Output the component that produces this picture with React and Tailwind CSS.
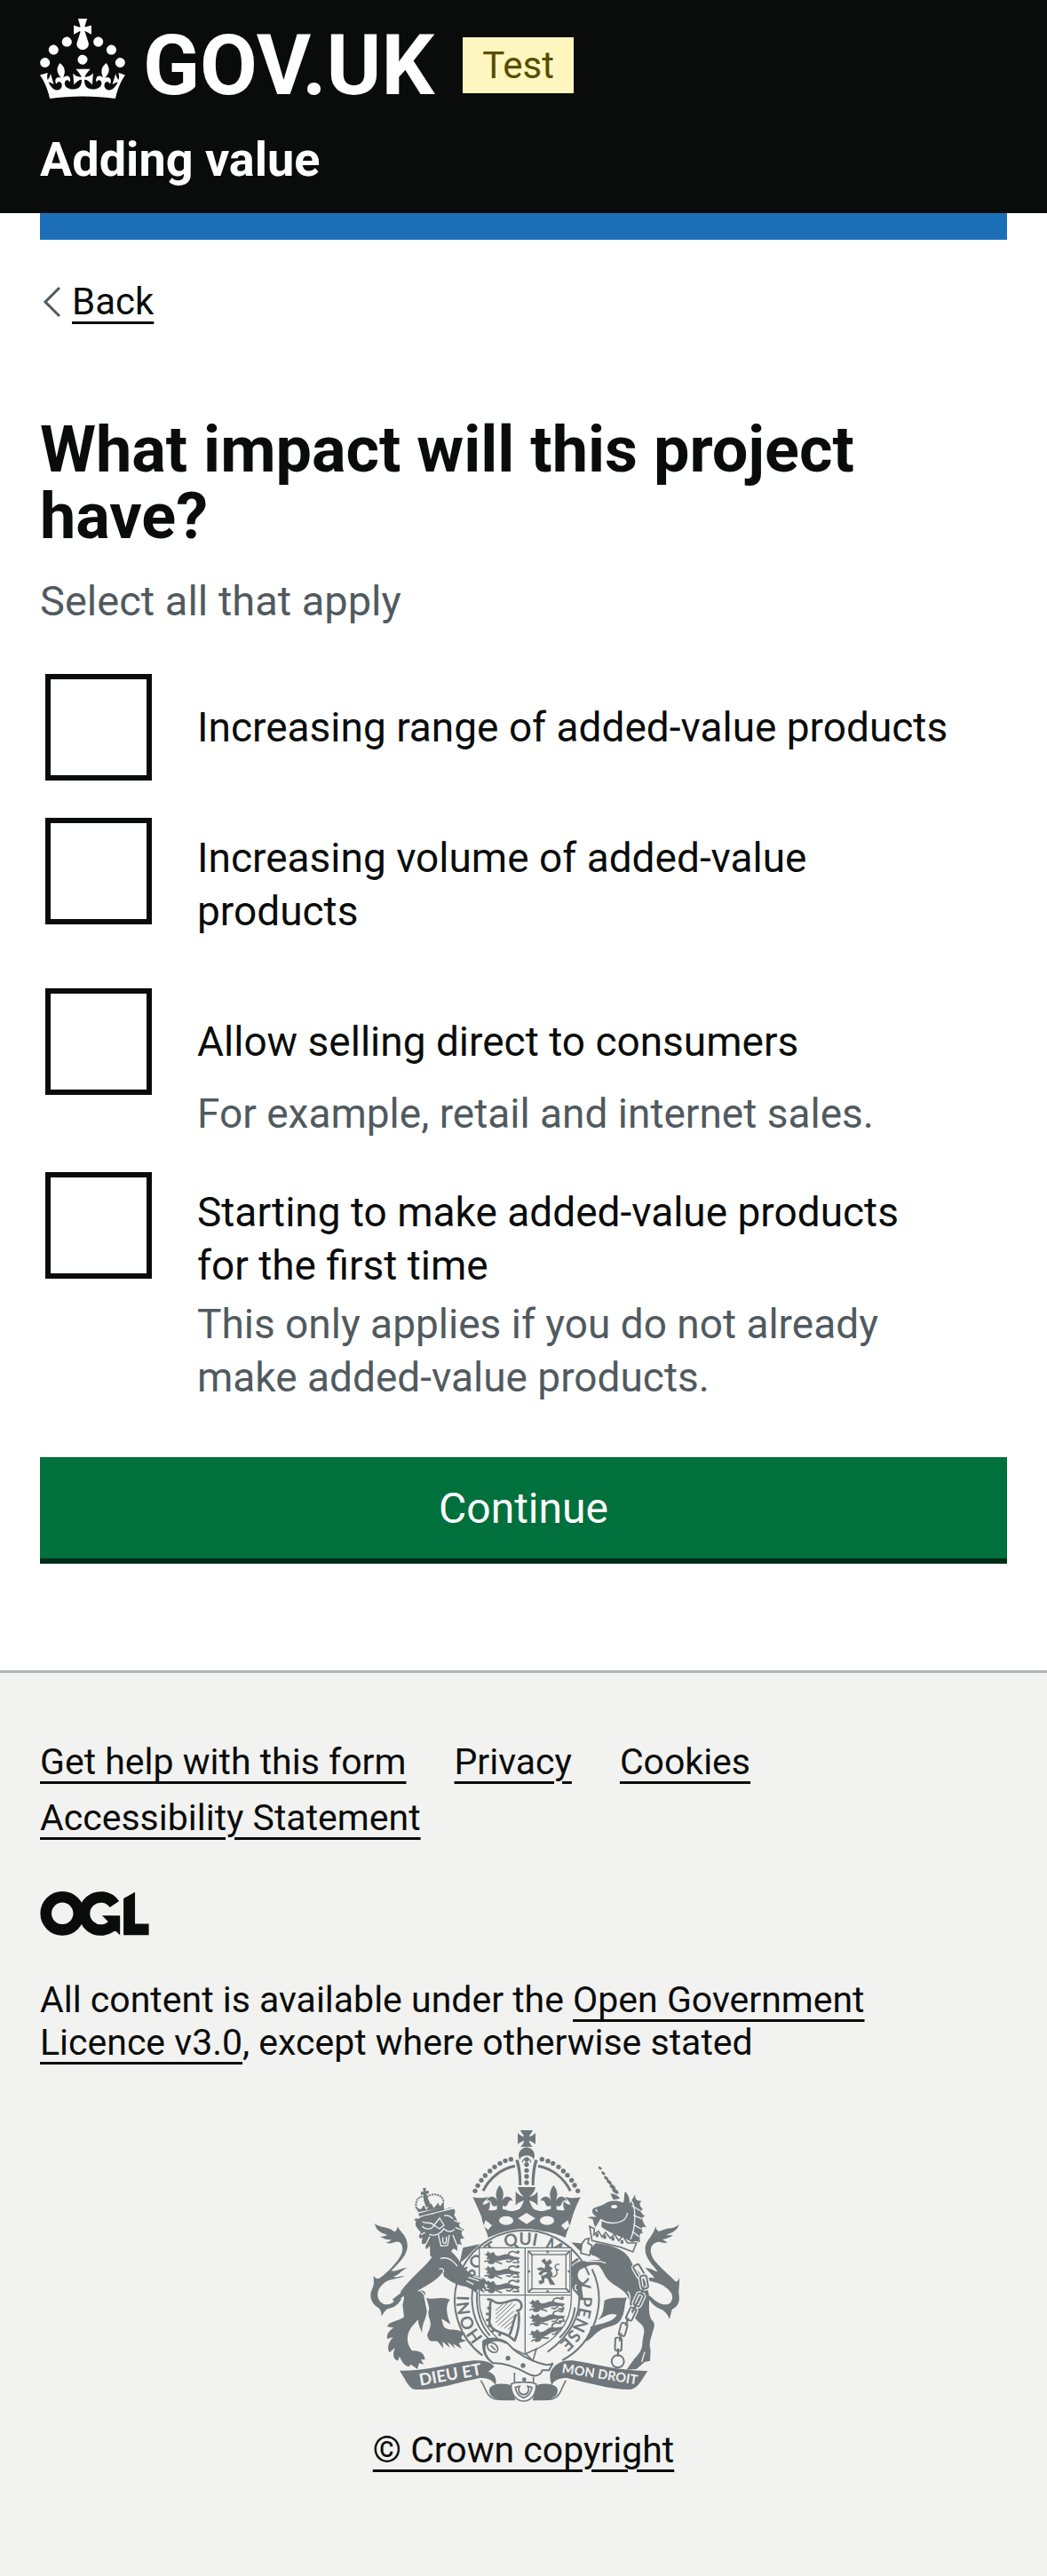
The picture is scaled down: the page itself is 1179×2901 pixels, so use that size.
const options = [
  { id: "range", label: "Increasing range of added-value products" },
  { id: "volume", label: "Increasing volume of added-value products" },
  {
    id: "direct",
    label: "Allow selling direct to consumers",
    hint: "For example, retail and internet sales.",
  },
  {
    id: "starting",
    label: "Starting to make added-value products for the first time",
    hint: "This only applies if you do not already make added-value products.",
  },
];

const footerLinks = ["Get help with this form", "Privacy", "Cookies", "Accessibility Statement"];

const linkClass = "underline decoration-[3px] underline-offset-[8px]";

function Crown() {
  return (
    <svg viewBox="0 0 32 30" className="h-[90px] w-24 shrink-0" fill="currentColor" aria-hidden="true">
      <path d="M22.6 10.4c-1 .4-2-.1-2.4-1-.4-.9.1-2 1-2.4.9-.4 2 .1 2.4 1s-.1 2-1 2.4m-5.9 6.7c-.9.4-2-.1-2.4-1-.4-.9.1-2 1-2.4.9-.4 2 .1 2.4 1s-.1 2-1 2.4m10.8-3.7c-1 .4-2-.1-2.4-1-.4-.9.1-2 1-2.4.9-.4 2 .1 2.4 1s0 2-1 2.4m3.3 4.8c-1 .4-2-.1-2.4-1-.4-.9.1-2 1-2.4.9-.4 2 .1 2.4 1s-.1 2-1 2.4M17 4.7l2.3 1.2V2.5l-2.3.7-.2-.2.9-3h-3.4l.9 3-.2.2c-.1.1-2.3-.7-2.3-.7v3.4L15 4.7c.1.1.1.2.2.2l-1.3 4c-.1.2-.1.4-.1.6 0 1.1.8 2 1.9 2.2h.7c1-.2 1.9-1.1 1.9-2.1 0-.2 0-.4-.1-.6l-1.3-4c-.1-.2 0-.2.1-.3m-7.6 5.7c.9.4 2-.1 2.4-1 .4-.9-.1-2-1-2.4-.9-.4-2 .1-2.4 1s0 2 1 2.4m-5 3c.9.4 2-.1 2.4-1 .4-.9-.1-2-1-2.4-.9-.4-2 .1-2.4 1s.1 2 1 2.4m-3.2 4.8c.9.4 2-.1 2.4-1 .4-.9-.1-2-1-2.4-.9-.4-2 .1-2.4 1s0 2 1 2.4m14.8 11c4.4 0 8.6.3 12.3.8 1.1-4.5 2.4-7 3.7-8.8l-2.5-.9c.2 1.3.3 1.9 0 2.7-.4-.4-.8-1.1-1.1-2.3l-1.2 4c.7-.5 1.3-.8 2-.9-1.1 2.5-2.6 3.1-3.5 3-1.1-.2-1.7-1.2-1.5-2.1.3-1.2 1.5-1.5 2.1-.1 1.1-2.3-.8-3-2-2.3 1.9-1.9 2.1-3.5.6-5.6-2.1 1.6-2.1 3.2-1.2 5.5-1.2-1.4-3.2-.6-2.5 1.6.9-1.4 2.1-.5 1.9.8-.2 1.1-1.7 2.1-3.5 1.9-2.7-.2-2.9-2.1-2.9-3.6.7-.1 1.9.5 2.9 1.9l.4-4.3c-1.1 1.1-2.1 1.4-3.2 1.4.4-1.2 2.1-3 2.1-3h-5.4s1.7 1.9 2.1 3c-1.1 0-2.1-.2-3.2-1.4l.4 4.3c1-1.4 2.2-2 2.9-1.9-.1 1.5-.2 3.4-2.9 3.6-1.9.2-3.4-.8-3.5-1.9-.2-1.3 1-2.2 1.9-.8.7-2.3-1.2-3-2.5-1.6.9-2.2.9-3.9-1.2-5.5-1.5 2-1.3 3.7.6 5.6-1.2-.7-3.1 0-2 2.3.6-1.4 1.8-1.1 2.1.1.2.9-.3 1.9-1.5 2.1-.9.2-2.4-.5-3.5-3 .6 0 1.2.3 2 .9l-1.2-4c-.3 1.1-.7 1.9-1.1 2.3-.3-.8-.2-1.4 0-2.7l-2.9.9C1.3 23 2.6 25.5 3.7 30c3.7-.5 7.9-.8 12.3-.8" />
    </svg>
  );
}

function OglMark() {
  return (
    <svg viewBox="0 0 369 151" className="h-[50px] w-[123px]" role="img" aria-label="Open Government Licence">
      <g fill="none" stroke="#0a0c0b" strokeWidth="38">
        <circle cx="75" cy="75" r="56" />
        <path d="M252 44A56 56 0 1 0 252 107" />
      </g>
      <path d="M210 82H271V149L257 135C250 139 243 131 238 122L227 111L235 107Z" fill="#0a0c0b" />
      <path d="M283 24L322 2V110H369V149H283Z" fill="#0a0c0b" />
    </svg>
  );
}

function PassantLion({ transform }) {
  return (
    <g transform={transform}>
      <path d="M0 8L9 10L14 0L22 7L34 2L39 12L42 28L36 40C28 46 17 44 13 37L20 28L8 25L14 18Z" />
      <path d="M38 12C52 22 64 8 82 10L96 16C108 20 118 18 124 24L110 30L102 27L88 28C74 26 60 32 42 34Z" />
      <g fill="none" stroke="#6f777b" strokeWidth="5" strokeLinecap="round">
        <path d="M16 32L4 34M40 34L60 42M84 12C84 0 100 -2 108 4C118 10 124 -2 113 0M102 26L88 36L78 34M114 26L118 38L100 38" />
      </g>
    </g>
  );
}

const archBeads = [
  [405, 256], [414, 238], [426, 220], [439, 204], [455, 189], [471, 175], [489, 163], [507, 154], [526, 149],
  [631, 149], [651, 155], [668, 163], [687, 175], [703, 189], [717, 203], [731, 220], [741, 237], [752, 256],
];

function RoyalArms() {
  const ink = "#6f777b";
  const paper = "#f2f2f0";
  return (
    <svg viewBox="6 51 1125 918" className="h-[306px] w-[375px]" fill={ink} aria-hidden="true">
      <defs>
        <path id="garter-line" d="M571 812A187 187 0 0 1 571 438A187 187 0 0 1 571 812" />
        <clipPath id="shield-clip">
          <path d="M419 448H730V620C730 710 670 770 574 808C478 770 419 710 419 620Z" />
        </clipPath>
      </defs>

      {/* Crown */}
      <path d="M558 51H600C598 58 590 64 587 73C596 71 603 66 609 60V98C603 93 596 88 587 86C589 95 594 101 600 107H558C564 101 569 95 571 86C562 88 555 93 549 98V60C555 66 562 71 571 73C568 64 560 58 558 51Z" />
      <circle cx="579" cy="136" r="27" />
      <path d="M556 150C560 132 598 132 602 150L594 237H564Z" fill={paper} />
      <path d="M541 152L551 150C560 175 562 210 562 237H553C552 205 550 180 541 152Z" />
      <path d="M617 152L607 150C598 175 596 210 596 237H605C606 205 608 180 617 152Z" />
      <path d="M565 160A14 14 0 0 1 593 160" fill="none" stroke={ink} strokeWidth="4" />
      {[150, 167, 187, 207, 228].map((y) => (
        <circle key={y} cx="579" cy={y} r="8" />
      ))}
      {archBeads.map(([x, y]) => (
        <circle key={x} cx={x} cy={y} r="8" />
      ))}
      <path d="M432 256C452 215 490 182 540 172M727 256C706 215 668 182 618 172" fill="none" stroke={ink} strokeWidth="9" />
      <path d="M410 300C430 322 460 326 480 318C500 312 510 324 530 324C545 324 550 314 579 314C608 314 613 324 628 324C648 324 658 312 678 318C698 326 728 322 748 300L733 345C728 370 715 390 710 414C640 380 520 380 449 414C445 390 430 370 427 345Z" />
      <path d="M397 277C415 282 435 280 450 276C441 287 432 294 430 302C440 303 448 296 454 290C457 305 454 318 446 328L424 335Z" />
      <path d="M761 277C743 282 723 280 708 276C717 287 726 294 728 302C718 303 710 296 704 290C701 305 704 318 712 328L734 335Z" />
      {[0, 182].map((x) => (
        <path key={x} transform={`translate(${x} 0)`} d="M488 237C504 255 503 275 494 291C505 270 525 270 533 290C524 285 518 290 516 298C514 308 505 311 498 305V328H479V305C470 311 462 308 460 298C458 290 451 285 443 290C451 270 471 270 482 291C473 275 473 255 488 237Z" />
      ))}
      <path d="M549 243H609C607 257 598 268 588 276C603 272 612 265 616 257V305C610 297 600 291 588 288C592 300 600 315 608 324H550C558 315 566 300 570 288C560 291 548 297 542 305V257C548 265 557 272 570 276C560 268 552 257 549 243Z" />
      <g fill={paper}>
        <ellipse cx="510" cy="356" rx="24" ry="15" />
        <ellipse cx="648" cy="356" rx="24" ry="15" />
        <path d="M550 349L579 330L608 349L579 368Z" />
        <path d="M440 355L462 372L449 388L434 374Z" />
        <path d="M718 355L696 372L709 388L724 374Z" />
      </g>

      {/* Shoulder drapery behind the garter */}
      <path d="M364 448L448 430L400 460L352 502Z" />
      <path d="M730 430L790 436L800 470L760 460Z" />

      {/* Garter */}
      <circle cx="571" cy="626" r="235" fill={paper} stroke={paper} strokeWidth="14" />
      <path d="M345 560A235 235 0 0 0 430 812M360 520A235 235 0 0 1 790 540M800 520A235 235 0 0 1 700 828" fill="none" stroke={ink} strokeWidth="6" />
      <path d="M396 590C388 660 410 730 470 772M412 596C408 640 415 700 455 745M757 608C760 680 730 740 650 800M742 650C738 690 720 725 690 752" fill="none" stroke={ink} strokeWidth="6" />
      <g fontFamily="Lato, sans-serif" fontSize="58" fontWeight="700">
        <text><textPath href="#garter-line" startOffset="155">HONI</textPath></text>
        <text><textPath href="#garter-line" startOffset="366">SOIT</textPath></text>
        <text><textPath href="#garter-line" startOffset="522">QUI</textPath></text>
        <text><textPath href="#garter-line" startOffset="654">MAL</textPath></text>
        <text><textPath href="#garter-line" startOffset="814">Y</textPath></text>
        <text><textPath href="#garter-line" startOffset="868">PENSE</textPath></text>
      </g>

      {/* Shield */}
      <path d="M419 448H730V620C730 710 670 770 574 808C478 770 419 710 419 620Z" fill={paper} stroke={ink} strokeWidth="4" />
      <path d="M574 448V808M419 608H730" stroke={ink} strokeWidth="4" />
      <g clipPath="url(#shield-clip)">
        <PassantLion transform="translate(434 460)" />
        <PassantLion transform="translate(434 509)" />
        <PassantLion transform="translate(434 558)" />
        <PassantLion transform="translate(584 624) rotate(-4)" />
        <PassantLion transform="translate(584 674) rotate(-8)" />
        <PassantLion transform="translate(582 732) rotate(-18)" />
      </g>
      <g fill="none" stroke={ink}>
        <rect x="584" y="459" width="141" height="140" strokeWidth="3" />
        <rect x="597" y="471" width="115" height="116" strokeWidth="4" />
        <path d="M584 459l14 14M725 459l-14 14M584 599l14-14M725 599l-14-14" strokeWidth="6" />
        <path d="M650 458v8M650 592v8M583 528h8M718 528h8" strokeWidth="8" />
      </g>
      <path d="M628 492L640 484L646 496L658 486L665 498L654 508L668 518L660 524C668 532 670 545 660 548L668 560L676 574L658 572L650 552L640 550L638 566L624 572L618 560L630 558L628 544L644 538L650 530L636 532L628 542L618 536L632 522L622 526L612 518L628 514L640 518L642 506Z" />
      <path d="M664 546C680 548 686 534 678 520C670 506 682 502 690 504M678 520L688 524" fill="none" stroke={ink} strokeWidth="4" />
      <path d="M446 624C456 616 464 630 478 634C500 640 520 626 538 624C552 622 562 632 562 644C562 656 550 664 544 658M458 628C452 650 458 668 454 690C450 712 466 726 490 734C510 740 524 746 538 762M552 664C556 700 548 740 538 764M544 672C532 700 530 730 520 744" fill="none" stroke={ink} strokeWidth="8" />
      <path d="M446 652h14M442 672h14M442 692h14M448 712h14M462 732l10-10M486 746l6-12" stroke={ink} strokeWidth="9" />
      <path d="M474 660l26-22M474 674l42-40M474 688l56-54M474 702l68-64M482 710l54-48M492 716l44-38M504 720l30-26M516 724l16-14" stroke={ink} strokeWidth="3" />

      {/* Belt of the garter */}
      <path d="M432 765C450 748 500 752 520 776C535 796 560 812 600 830C630 840 650 850 668 838L655 862L632 862C625 885 600 884 580 872C540 850 500 836 466 838C440 820 430 800 432 765Z" fill={paper} stroke={ink} strokeWidth="6" />
      <path d="M432 765C450 748 500 752 520 776L498 768C478 760 450 764 440 780C438 805 450 822 470 840C445 830 428 800 432 765Z" />
      <ellipse cx="464" cy="785" rx="20" ry="14" transform="rotate(40 464 785)" fill="none" stroke={ink} strokeWidth="5" />
      <path d="M458 778L474 794" stroke={ink} strokeWidth="5" />
      <circle cx="516" cy="821" r="8" />
      <circle cx="567" cy="846" r="8" />
      <path d="M576 806L612 790L600 830Z" fill={paper} stroke={ink} strokeWidth="5" />
      <path d="M538 870V906M602 884V906" stroke={ink} strokeWidth="5" />
      <circle cx="571" cy="893" r="7" />

      {/* Buckle and ribbon ends */}
      <path d="M455 940C440 905 505 902 528 914L540 962C500 966 462 960 455 940Z" />
      <path d="M682 940C697 905 632 902 610 914L600 962C640 966 675 960 682 940Z" />
      <path d="M424 896C440 915 440 950 470 958C490 963 510 961 540 961M712 896C698 915 696 950 668 958C648 963 628 961 600 961" fill="none" stroke={ink} strokeWidth="5" />
      <path d="M527 908C545 900 592 900 611 908C614 945 592 966 569 966C546 966 524 945 527 908Z" fill={paper} stroke={ink} strokeWidth="5" />
      <path d="M541 920L555 916C548 930 556 944 569 944C582 944 590 930 583 916L597 920C594 938 586 950 569 955C552 950 544 938 541 920Z" fill="none" stroke={ink} strokeWidth="5" />

      {/* Motto scrolls */}
      <path d="M150 863C240 866 330 835 400 829C440 826 460 836 470 850L450 866C476 876 478 895 474 912C465 895 445 886 420 888C340 905 280 927 205 927C180 925 172 895 150 863Z" />
      <path d="M988 864C900 866 810 840 735 829C700 826 672 840 660 868C656 885 660 900 664 912C672 895 690 888 715 888C790 905 860 927 930 927C960 920 970 890 988 864Z" />
      <g fill={paper} fontFamily="Lato, sans-serif" fontWeight="700">
        <text x="220" y="914" fontSize="56" transform="rotate(-10 220 914)">DIEU ET</text>
        <text x="697" y="870" fontSize="44" transform="rotate(9 697 870)">MON DROIT</text>
      </g>

      {/* Lion */}
      <path d="M130 628L172 596" stroke={ink} strokeWidth="14" />
      <path d="M66 366C84 382 112 376 130 392C138 396 142 386 143 376C152 396 180 410 176 448C172 480 140 505 122 526C140 530 155 515 176 516C155 524 150 540 128 546C142 550 155 542 168 544C140 556 115 550 92 572C66 596 74 630 96 638C120 645 135 628 148 612L156 622C140 650 120 652 106 656C98 662 96 670 88 680C90 668 86 660 80 652C55 640 46 612 56 590C66 570 62 560 62 542C70 552 74 556 84 550C110 530 140 500 154 474C166 450 158 425 138 428C125 430 116 438 104 430C112 430 118 426 122 420C108 422 94 416 84 410C94 410 102 408 108 404C90 400 70 390 66 366Z" />
      <path d="M262 476C240 510 190 545 152 598C166 602 168 615 160 640L165 682C140 700 115 695 108 715L130 718C112 730 106 742 108 756L128 750C112 768 106 785 116 802L134 786C128 805 124 822 144 830L150 815C158 835 165 845 182 850L188 842L210 858L216 838L232 842L222 826L236 826C232 800 215 796 192 796C180 780 170 760 182 730C190 712 206 700 212 690C214 710 220 724 226 734C224 705 240 690 242 662L232 612C245 600 230 590 214 592C240 575 275 560 296 530L300 545C320 560 340 575 375 580L392 588L408 600L415 588L438 602L428 584L444 590L436 570L452 572L436 552L400 540C370 530 355 490 330 466L290 440Z" />
      <path d="M240 618C265 625 300 610 320 624C305 640 306 670 322 706C300 695 285 675 296 704C300 735 340 715 372 738C355 745 352 758 376 762L350 770L360 790L330 772L338 788L312 766L320 786L295 765L298 788L278 764C262 762 250 768 246 752C238 740 252 730 254 712C258 690 240 680 250 655C248 640 244 630 240 618Z" />
      <path d="M206 358C190 352 208 348 214 350C230 335 260 340 275 328L320 312C335 312 342 322 334 338C345 350 340 360 356 362C345 370 352 382 370 386C355 390 356 402 370 418C355 412 350 420 362 440C345 430 342 440 346 460C332 446 326 450 324 468C312 456 304 462 296 480L262 480C245 480 258 450 250 442C240 460 234 452 240 432C226 440 220 435 228 415C214 420 212 410 222 396C206 380 200 372 206 358Z" />
      <path d="M226 360C240 368 256 358 266 372C258 388 238 388 226 376M300 340C312 336 322 342 330 350M266 372L285 348L300 372L285 384ZM250 402C270 412 290 398 300 384C310 395 325 396 335 386M280 400L290 442L312 440L318 405M252 410L238 438M330 405L344 440M338 380L362 388M334 356L352 362M236 396L222 404" fill="none" stroke={paper} strokeWidth="4" />
      <path d="M296 412V428C300 436 308 434 308 424V410" fill="none" stroke={paper} strokeWidth="4" />
      <path d="M206 344L334 314" stroke={paper} strokeWidth="5" />
      <path d="M214 332L298 310L302 320L216 342Z" />
      <path d="M213 328L205 312L222 318L232 304L240 320L256 298L266 314L280 296L286 308L300 290L299 312Z" />
      <path d="M207 316C200 290 215 272 232 276M242 276C262 262 292 266 298 290" fill="none" stroke={ink} strokeWidth="6" strokeDasharray="6 3" />
      <path d="M229 246H239L238 257L248 254V266L240 265L246 282L256 305L240 312L232 290L230 268L222 270V258L230 260Z" />
      <path d="M284 520C294 515 300 520 298 532M212 594C220 590 226 595 236 612M376 560L400 572M382 548L418 560M398 545L430 553M288 484C310 478 330 490 345 510" fill="none" stroke={paper} strokeWidth="4" />

      {/* Unicorn */}
      <path d="M1094 368C1088 395 1060 400 1050 406L1074 406C1060 416 1048 418 1038 420L1054 430C1040 436 1030 424 1018 430C990 440 996 470 1010 490C1030 515 1060 540 1080 560C1088 566 1092 558 1094 548C1098 575 1090 585 1094 610C1098 635 1085 650 1070 656L1062 690C1055 670 1040 658 1030 655C1000 640 990 620 985 605L1000 614C1020 635 1050 650 1066 632C1082 605 1060 590 1040 575C1015 560 990 565 976 548L1012 550L980 516C1000 516 1010 528 1022 528C1000 500 976 480 980 445C985 420 1005 410 1015 376C1018 390 1022 396 1034 390C1060 378 1080 385 1094 368Z" />
      {[[827, 179], [838, 196], [848, 213], [858, 226], [869, 242], [879, 257]].map(([x, y], i) => (
        <ellipse key={x} cx={x} cy={y} rx={7 + i} ry={4 + i / 2} transform={`rotate(38 ${x} ${y})`} />
      ))}
      <path d="M862 265C875 266 888 270 894 282L872 286Z" />
      <path d="M912 258C922 268 930 285 926 300L946 268C944 285 950 290 968 290C958 296 958 305 974 320C960 318 960 328 980 342C965 342 966 352 984 380C968 372 964 382 972 400C960 396 960 405 962 430C950 425 945 425 936 430L918 420C900 410 870 405 832 378C830 365 838 352 828 352L812 378C805 372 806 360 802 352L784 346C795 340 806 346 816 342C800 338 798 322 804 316C815 308 830 308 842 300C855 290 880 285 905 296C912 285 906 270 912 258Z" />
      <path d="M812 318L818 326M866 308L884 310M828 352C860 372 915 370 920 330M932 288C950 310 948 380 930 420M934 306L962 322M940 338L968 350M940 370L966 384M936 392L958 410" fill="none" stroke={paper} strokeWidth="4" />
      <ellipse cx="875" cy="309" rx="10" ry="6" fill={paper} />
      <path d="M792 376L808 384L806 404L822 392L834 412L846 396L862 416L876 402L890 424L904 408L920 432L950 432L938 462L896 446L800 424Z" fill={paper} stroke={ink} strokeWidth="5" />
      <path d="M812 400h10v12h-10zM838 406h10v12h-10zM866 412h10v12h-10zM896 422h10v12h-10z" />
      <path d="M776 420L790 416L786 432L800 440L792 474L762 466L766 434Z" fill={paper} stroke={ink} strokeWidth="5" />
      <path d="M812 432C860 438 910 450 930 490C940 520 985 545 988 590C1000 620 985 660 1000 690C1018 705 1008 720 1004 735C1000 755 990 770 998 794L996 830L978 834L950 858L916 860L938 830C950 812 970 800 970 770C972 740 985 725 965 705C945 690 930 670 928 640C925 600 900 590 870 570C840 550 840 525 822 508C800 500 775 515 760 522C745 535 752 560 770 566C760 580 770 595 770 625C758 625 752 605 742 598C725 585 735 560 732 540C722 520 735 500 758 494L828 488C812 470 795 480 790 460Z" />
      <path d="M842 626C870 612 900 620 918 616C908 640 912 665 900 685C890 715 850 712 826 728C805 740 800 755 780 764C778 745 795 735 795 715C820 705 870 702 884 675C860 665 845 680 818 692C840 675 838 650 842 626Z" />
      <path d="M778 494H828L846 500M748 572C738 580 744 595 750 590M920 596C932 604 930 620 924 640M978 800L968 834" fill="none" stroke={paper} strokeWidth="4" />
      {[[958, 526, 60], [976, 564, 80], [958, 624, 115], [932, 672, 115], [905, 724, 105], [889, 774, 92]].map(([x, y, a]) => (
        <g key={y} transform={`rotate(${a} ${x} ${y})`} fill="none">
          <rect x={x - 22} y={y - 11} width="44" height="22" rx="7" stroke={paper} strokeWidth="14" />
          <rect x={x - 22} y={y - 11} width="44" height="22" rx="7" stroke={ink} strokeWidth="6" />
        </g>
      ))}
      {[[970, 594, 110], [945, 648, 115], [918, 698, 110], [896, 750, 100], [888, 802, 90]].map(([x, y, a]) => (
        <path key={y} d={`M${x - 14} ${y}h28`} transform={`rotate(${a} ${x} ${y})`} stroke={ink} strokeWidth="7" />
      ))}
      <circle cx="887" cy="832" r="21" fill="none" stroke={ink} strokeWidth="6" />
    </svg>
  );
}

export default function App() {
  return (
    <div className="bg-white font-['Roboto',sans-serif] text-[#0a0c0b]">
      <header className="bg-[#0a0c0b] px-[45px] text-white">
        <div className="flex items-start pt-[21px]">
          <a href="#home" className="flex items-start gap-5 text-[94px] leading-[106px] font-bold">
            <Crown />
            GOV.UK
          </a>
          <strong className="mt-[21px] ml-8 bg-[#fff7bf] px-[22px] py-[6px] text-[42px] leading-[51px] font-normal text-[#594d00]">
            Test
          </strong>
        </div>
        <a href="#service" className="inline-block pt-[23px] pb-[30px] text-[54px] leading-[60px] font-bold">
          Adding value
        </a>
      </header>

      <div className="px-[45px]">
        <div className="h-[30px] bg-[#1d70b8]" />
        <a href="#back" className="mt-[46px] flex w-fit items-center gap-3 text-[42px] leading-[48px]">
          <svg viewBox="0 0 24 36" className="h-9 w-6" fill="none" stroke="#505a5f" strokeWidth="3" aria-hidden="true">
            <path d="M22 2L6 18L22 34" />
          </svg>
          <span className={linkClass}>Back</span>
        </a>

        <main className="pt-[105px] pb-[120px]">
          <form onSubmit={(event) => event.preventDefault()}>
            <fieldset aria-describedby="impact-hint">
              <legend>
                <h1 className="text-[72px] leading-[75px] font-bold">What impact will this project have?</h1>
              </legend>
              <p id="impact-hint" className="mt-7 text-[47px] leading-[60px] text-[#505a5f]">
                Select all that apply
              </p>
              <div className="mt-[46px] flex flex-col gap-[30px]">
                {options.map(({ id, label, hint }) => (
                  <div key={id} className="grid grid-cols-[132px_1fr] text-[46px] leading-[60px]">
                    <input
                      id={id}
                      type="checkbox"
                      aria-describedby={hint ? `${id}-hint` : undefined}
                      className="m-[6px] size-[120px] appearance-none border-[6px] border-[#0a0c0b] bg-white checked:bg-[#0a0c0b]"
                    />
                    <label htmlFor={id} className="self-center py-[21px] pr-[60px] pl-[45px]">
                      {label}
                    </label>
                    {hint && (
                      <p id={`${id}-hint`} className="col-start-2 -mt-[15px] pr-[60px] pl-[45px] text-[#505a5f]">
                        {hint}
                      </p>
                    )}
                  </div>
                ))}
              </div>
            </fieldset>
            <button
              type="submit"
              className="mt-[60px] block w-full border-b-[6px] border-[#002d18] bg-[#00703c] pt-[28px] pb-[26px] text-[48px] leading-[60px] text-white"
            >
              Continue
            </button>
          </form>
        </main>
      </div>

      <footer className="border-t-[3px] border-[#b1b4b6] bg-[#f2f2f0] px-[45px] pt-[76px] pb-[120px] text-[41px] leading-[48px]">
        <ul className="flex flex-wrap gap-x-[54px] gap-y-[15px]">
          {footerLinks.map((text) => (
            <li key={text}>
              <a href="#footer" className={linkClass}>
                {text}
              </a>
            </li>
          ))}
        </ul>
        <div className="mt-[59px]">
          <OglMark />
        </div>
        <p className="mt-12 pr-[60px]">
          All content is available under the{" "}
          <a href="#licence" className={linkClass}>
            Open Government Licence v3.0
          </a>
          , except where otherwise stated
        </p>
        <a href="#copyright" className={`mx-auto mt-[75px] flex w-fit flex-col items-center gap-[30px] ${linkClass}`}>
          <RoyalArms />
          © Crown copyright
        </a>
      </footer>
    </div>
  );
}
